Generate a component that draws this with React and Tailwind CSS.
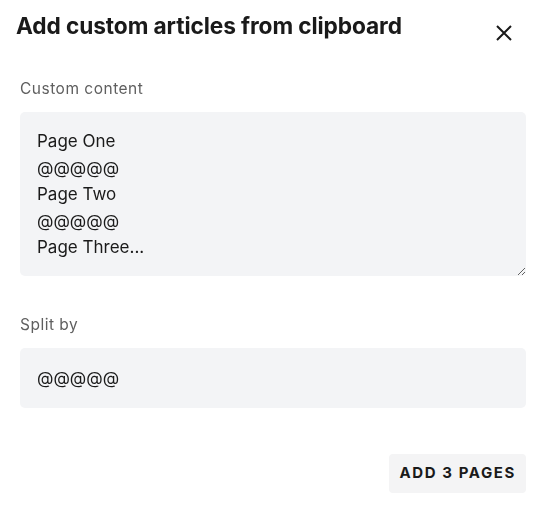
import React, { useState } from 'react';

const FONT = { fontFamily: 'Inter, "Liberation Sans", sans-serif' };

function App() {
  const [content, setContent] = useState(
    'Page One\n@@@@@\nPage Two\n@@@@@\nPage Three...'
  );
  const [split, setSplit] = useState('@@@@@');
  const pages = content.split(split).length;

  return (
    <div className="w-[546px] h-[513px] bg-white text-[#1a1a1a]" style={FONT}>
      <header className="flex items-start justify-between pl-[16px] pr-[34px] pt-[11px]">
        <h1 className="text-[22.7px] font-bold leading-[30px] tracking-[-0.1px]">
          Add custom articles from clipboard
        </h1>
        <button type="button" className="mt-[14px] text-[#1a1a1a]" aria-label="close">
          <svg width="16" height="16" viewBox="0 0 16 16" fill="none" stroke="currentColor" strokeWidth="2">
            <path d="M1 1 L15 15 M15 1 L1 15" />
          </svg>
        </button>
      </header>

      <section className="px-[20px] pt-[38px]">
        <label className="block text-[15.5px] leading-[20px] tracking-[0.5px] text-[#5f5f5f]">
          Custom content
        </label>
        <textarea
          value={content}
          onChange={(e) => setContent(e.target.value)}
          className="mt-[13px] block w-full h-[164px] rounded-[5px] bg-[#f3f4f6] px-[17px] py-[16px] text-[17px] leading-[26.5px] outline-none resize-y"
        />

        <label className="block mt-[39px] text-[15.5px] leading-[20px] tracking-[0.5px] text-[#5f5f5f]">
          Split by
        </label>
        <input
          value={split}
          onChange={(e) => setSplit(e.target.value)}
          className="mt-[13px] block w-full h-[60px] rounded-[5px] bg-[#f3f4f6] px-[17px] text-[17px] outline-none"
        />

        <div className="flex justify-end mt-[46px]">
          <button
            type="button"
            className="h-[39px] px-[10px] rounded-[4px] bg-[#f4f4f5] text-[15px] font-bold tracking-[1.6px] text-[#1a1a1a]"
          >
            ADD {pages} PAGES
          </button>
        </div>
      </section>
    </div>
  );
}

export default App;
